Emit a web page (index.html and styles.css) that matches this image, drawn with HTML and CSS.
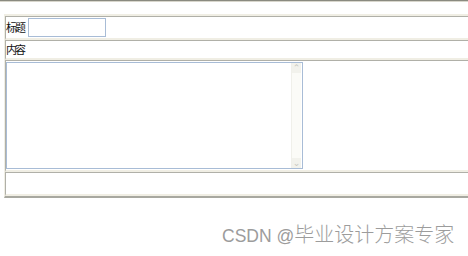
FILE: index.html
```html
<!DOCTYPE html>
<html>
<head>
<meta charset="utf-8">
<link rel="stylesheet" href="styles.css">
</head>
<body>
<div class="topline"></div>
<div class="form">
  <div class="row row-title">
    <span class="label">标题</span>
    <span class="input"></span>
  </div>
  <div class="row row-label">
    <span class="label">内容</span>
  </div>
  <div class="row row-area">
    <div class="area">
      <div class="area-text"></div>
      <div class="scroll">
        <span class="arrow">&#8963;</span>
        <span class="arrow">&#8964;</span>
      </div>
    </div>
  </div>
  <div class="row row-empty"></div>
</div>
<div class="mark"><span class="mark-latin">CSDN @</span><span class="mark-cjk">毕业设计方案专家</span></div>
</body>
</html>
```
FILE: styles.css
```css
html, body {
  margin: 0;
  padding: 0;
  width: 468px;
  height: 256px;
  overflow: hidden;
  background: #fff;
  font-family: "Noto Sans CJK SC", "DejaVu Sans", sans-serif;
}
.topline {
  height: 1px;
  background: #8a8a80;
  border-bottom: 1px solid #d8d6cc;
}
.form {
  margin: 12px 0 0 4px;
  width: 480px;
  border-top: 2px solid #f0eee4;
  border-left: 1px solid #f0eee4;
  border-bottom: 2px solid #a8a8a0;
}
.row {
  border-top: 1px solid #b0b0a8;
  border-left: 1px solid #b0b0a8;
  border-bottom: 2px solid #f0eee4;
  display: flex;
  align-items: center;
}
.label {
  font-size: 11px;
  line-height: 13px;
  color: #111;
  letter-spacing: -2px;
}
.row-title {
  height: 21px;
}
.input {
  display: block;
  width: 76px;
  height: 17px;
  margin-left: 4px;
  border: 1px solid #a8bcd6;
  background: #fff;
}
.row-label {
  height: 17px;
}
.row-area {
  padding: 1px 0;
}
.area {
  width: 295px;
  height: 105px;
  border: 1px solid #a8bcd6;
  display: flex;
}
.area-text {
  flex: 1;
}
.scroll {
  width: 9px;
  margin-right: 1px;
  background: #fbfbf7;
  border-left: 1px solid #f0f0ea;
  display: flex;
  flex-direction: column;
  justify-content: space-between;
  align-items: center;
}
.arrow {
  font-family: "DejaVu Sans", sans-serif;
  font-size: 9px;
  line-height: 10px;
  color: #c8c8c0;
  width: 9px;
  text-align: center;
  background: #f2f2ec;
}
.row-empty {
  height: 21px;
}
.mark {
  margin: 24px 0 0 222px;
  color: #9c9c9c;
  white-space: nowrap;
  line-height: 24px;
}
.mark-latin {
  font-family: "Liberation Sans", sans-serif;
  font-size: 17.5px;
}
.mark-cjk {
  font-family: "Noto Sans CJK SC", sans-serif;
  font-size: 20px;
  font-weight: 300;
}
```
